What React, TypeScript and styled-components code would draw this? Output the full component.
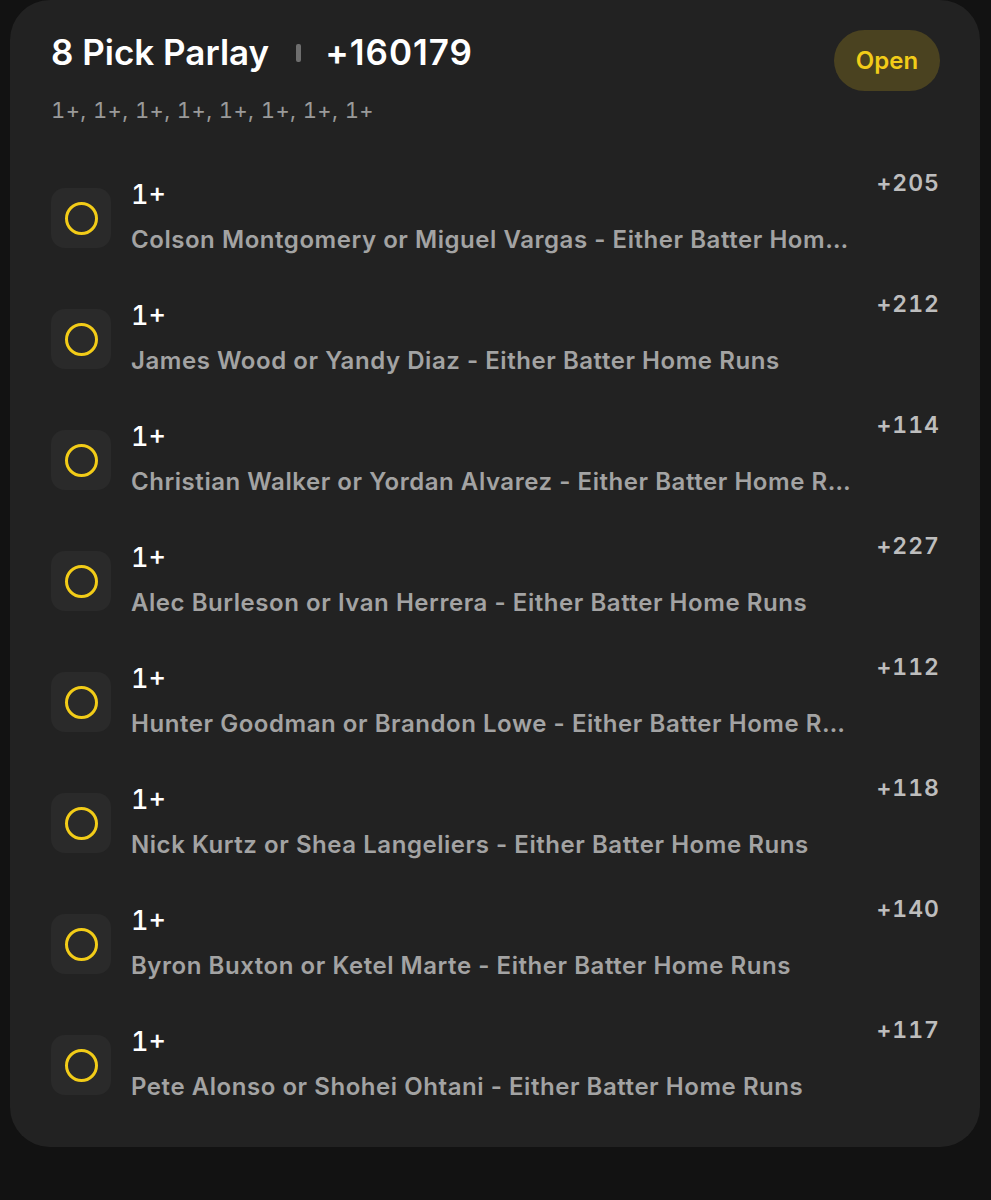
import React from 'react'
import styled, { createGlobalStyle } from 'styled-components'

const GlobalStyle = createGlobalStyle`
  html, body {
    margin: 0;
    padding: 0;
    background: #121212;
  }
  body {
    font-family: Inter, "Noto Sans", sans-serif;
    -webkit-font-smoothing: antialiased;
  }
`

const Page = styled.div`
  padding: 0 11px 0 10px;
  min-height: 1200px;
  box-sizing: border-box;
`

const Card = styled.div`
  background: #222222;
  border-radius: 40px;
  padding: 30px 40px 11px 41px;
`

const Header = styled.div`
  display: flex;
  align-items: flex-start;
  justify-content: space-between;
`

const TitleBlock = styled.div`
  display: flex;
  flex-direction: column;
  margin-top: 2px;
`

const TitleLine = styled.div`
  display: flex;
  align-items: center;
  color: #ffffff;
  font-size: 35px;
  line-height: 40px;
  font-weight: 600;
`

const TotalOdds = styled.span`
  letter-spacing: 1px;
`

const Divider = styled.span`
  width: 5px;
  height: 18px;
  border-radius: 2px;
  background: #6e6e6e;
  margin: 2px 24px 0 27px;
`

const Legs = styled.div`
  margin-top: 24px;
  color: #9a9a9a;
  font-size: 22px;
  line-height: 28px;
  letter-spacing: 0.4px;
  font-variant-numeric: tabular-nums;
`

const StatusPill = styled.span`
  display: inline-flex;
  align-items: center;
  justify-content: center;
  width: 106px;
  height: 61px;
  border-radius: 31px;
  background: #4a4220;
  color: #f2cc18;
  font-size: 24px;
  font-weight: 600;
`

const PickList = styled.div`
  margin-top: 44px;
`

const Pick = styled.div`
  display: grid;
  grid-template-columns: 60px minmax(0, 1fr) 82px;
  align-items: start;
  height: 121px;
`

const MarkerBox = styled.div`
  margin-top: 20px;
  width: 60px;
  height: 60px;
  border-radius: 14px;
  background: #2a2a2a;
  display: flex;
  align-items: center;
  justify-content: center;
`

const Ring = styled.span`
  width: 27px;
  height: 27px;
  border-radius: 50%;
  border: 3px solid #f2cc18;
`

const PickText = styled.div`
  margin-left: 20px;
  padding-top: 11px;
  min-width: 0;
`

const Line = styled.div`
  color: #ffffff;
  font-size: 27px;
  line-height: 32px;
  font-weight: 500;
  font-variant-numeric: tabular-nums;
`

const Market = styled.div`
  margin-top: 15px;
  color: #a3a3a3;
  font-size: 24px;
  line-height: 28px;
  font-weight: 600;
  letter-spacing: 0.55px;
  white-space: nowrap;
  overflow: hidden;
  text-overflow: ellipsis;
`

const Odds = styled.div`
  margin-top: 1px;
  text-align: right;
  color: #bdbdbd;
  font-size: 23px;
  line-height: 28px;
  font-weight: 600;
  letter-spacing: 1px;
  font-variant-numeric: tabular-nums;
`

const picks = [
  { players: 'Colson Montgomery or Miguel Vargas', odds: '+205' },
  { players: 'James Wood or Yandy Diaz', odds: '+212' },
  { players: 'Christian Walker or Yordan Alvarez', odds: '+114' },
  { players: 'Alec Burleson or Ivan Herrera', odds: '+227' },
  { players: 'Hunter Goodman or Brandon Lowe', odds: '+112' },
  { players: 'Nick Kurtz or Shea Langeliers', odds: '+118' },
  { players: 'Byron Buxton or Ketel Marte', odds: '+140' },
  { players: 'Pete Alonso or Shohei Ohtani', odds: '+117' },
]

const App = () => {
  return (
    <Page>
      <GlobalStyle />
      <Card>
        <Header>
          <TitleBlock>
            <TitleLine>
              8 Pick Parlay
              <Divider />
              <TotalOdds>+160179</TotalOdds>
            </TitleLine>
            <Legs>{picks.map(() => '1+').join(', ')}</Legs>
          </TitleBlock>
          <StatusPill>Open</StatusPill>
        </Header>
        <PickList>
          {picks.map((p) => (
            <Pick key={p.players}>
              <MarkerBox>
                <Ring />
              </MarkerBox>
              <PickText>
                <Line>1+</Line>
                <Market>{p.players} - Either Batter Home Runs</Market>
              </PickText>
              <Odds>{p.odds}</Odds>
            </Pick>
          ))}
        </PickList>
      </Card>
    </Page>
  )
}

export default App
